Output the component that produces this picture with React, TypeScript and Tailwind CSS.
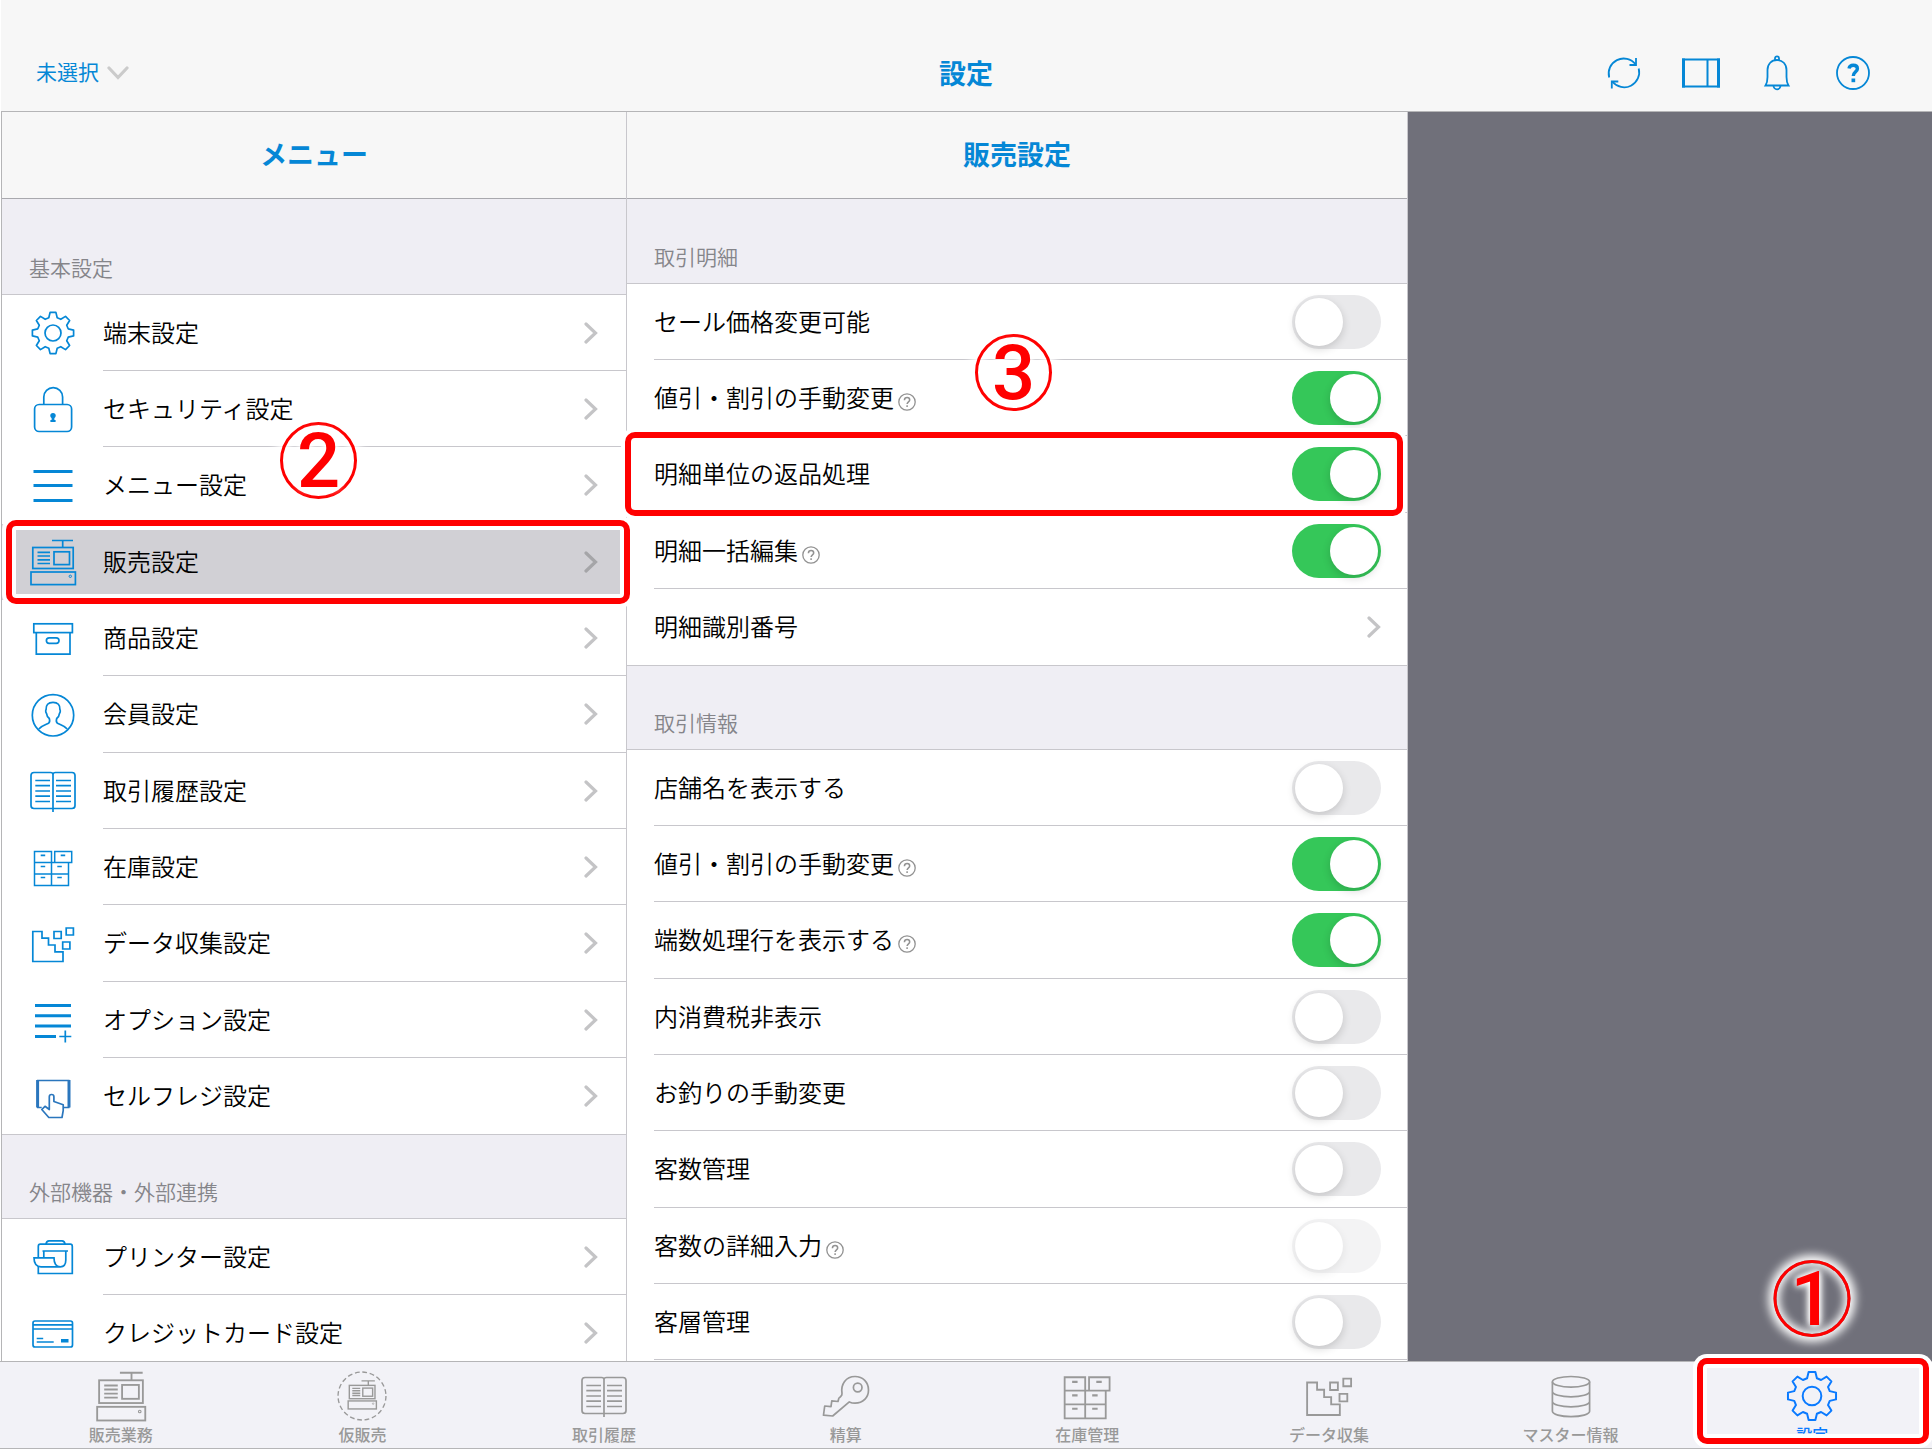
import { useState } from "react";
import type { ReactNode } from "react";
import clsx from "clsx";

type IconProps = { className?: string };

function Svg({ className = "size-12", children }: { className?: string; children: ReactNode }) {
  return (
    <svg viewBox="0 0 48 48" fill="none" stroke="currentColor" strokeWidth="1.7" className={clsx("shrink-0", className)} aria-hidden="true">
      {children}
    </svg>
  );
}

// one tooth is described around 12 o'clock and turned eight times
const tooth = [
  [-4.2, -15.2],
  [-2.9, -20.6],
  [2.9, -20.6],
  [4.2, -15.2],
];
const gearPath =
  Array.from({ length: 8 }, (_, i) => {
    const a = (i * Math.PI) / 4;
    return tooth
      .map(([x, y]) => `${(24 + x * Math.cos(a) - y * Math.sin(a)).toFixed(2)} ${(24 + x * Math.sin(a) + y * Math.cos(a)).toFixed(2)}`)
      .join("L");
  }).reduce((d, seg, i) => (i === 0 ? `M${seg}` : `${d}L${seg}`), "") + "Z";

const GearIcon = ({ className }: IconProps) => (
  <Svg className={className}>
    <path d={gearPath} strokeLinejoin="round" />
    <circle cx="24" cy="24" r="8" />
  </Svg>
);

const LockIcon = ({ className }: IconProps) => (
  <Svg className={className}>
    <path d="M14.8 19.5V12a9.4 9.4 0 0 1 18.8 0v7.5" />
    <rect x="5.6" y="19.5" width="37" height="27" rx="4.5" />
    <circle cx="24" cy="30.6" r="2.7" fill="currentColor" stroke="none" />
    <path d="M22.6 31h2.8v4h1.2v2h-5.2v-2h1.2z" fill="currentColor" stroke="none" />
  </Svg>
);

const LinesIcon = ({ className }: IconProps) => (
  <Svg className={className}>
    <path d="M4.5 9.5h39M4.5 23.5h39M4.5 38.5h39" strokeWidth="3" />
  </Svg>
);

const registerShape = (
  <>
    <path d="M23 2.5h21M33.7 2.5v7" />
    <rect x="3.8" y="9.5" width="40.4" height="21" />
    <rect x="25" y="13.8" width="15.5" height="12.8" />
    <path d="M8.5 14.3H21M8.5 18H21M8.5 21.8H21M8.5 25.5H21" />
    <rect x="2" y="34" width="44.4" height="12.6" />
    <circle cx="41.3" cy="38.3" r="1.2" strokeWidth="1" />
  </>
);

const RegisterIcon = ({ className }: IconProps) => <Svg className={className}>{registerShape}</Svg>;

const DashedRegisterIcon = ({ className }: IconProps) => (
  <Svg className={className}>
    <circle cx="24" cy="24" r="23" strokeDasharray="4.6 2.6" strokeWidth="1.3" />
    <g transform="translate(9.5 8) scale(.61)" strokeWidth="2.2">
      {registerShape}
    </g>
  </Svg>
);

const BoxIcon = ({ className }: IconProps) => (
  <Svg className={className}>
    <rect x="4.8" y="9.8" width="38.6" height="8.8" />
    <path d="M7.3 18.6v21.6H41V18.6" />
    <rect x="17.4" y="23.8" width="12.6" height="5.6" rx="2.8" />
  </Svg>
);

const PersonIcon = ({ className }: IconProps) => (
  <Svg className={className}>
    <circle cx="24" cy="24.3" r="20.7" />
    <path d="M9.8 38c2.5-3.2 7-4.2 9.7-5.7 1.5-1 1.4-2.8.8-4.8-1.9-1.5-2.6-3.3-2.8-5.2-.9-.8-1-3-.4-3.8-.3-4.5 2-7.2 6.900-7.200s7.200 2.700 6.900 7.200c.6.8.5 3-.4 3.800-.2 1.900-.9 3.700-2.800 5.200-.6 2-.7 3.800.8 4.800 2.700 1.500 7.200 2.500 9.700 5.700" />
  </Svg>
);

const BookIcon = ({ className }: IconProps) => (
  <Svg className={className}>
    <path d="M24 7.5c0-1.500-1-2-2.500-2H5a3 3 0 0 0-3 3v30a3 3 0 0 0 3 3h19M24 7.500c0-1.500 1-2 2.500-2H43a3 3 0 0 1 3 3v30a3 3 0 0 1-3 3H24M24 7v38" />
    <path d="M6.3 13.5H21M6.3 18.7H21M6.3 24H21M6.3 29.2H21M6.3 34.5H21M27 13.5h15M27 18.7h15M27 24h15M27 29.2h15M27 34.5h15" />
  </Svg>
);

const DrawersIcon = ({ className }: IconProps) => (
  <Svg className={className}>
    <path d="M5.5 8.5h17v11h-17zM25.7 8.5h17v11h-17zM5.5 19.5v23h34v-23M22.5 19.5v23M5.5 31h34M22.5 19.5h4" strokeWidth="1.5" />
    <path d="M11.7 12.3h4.5M31.7 12.3h4.5M11.7 23.5h4.5M28.3 23.5h4.5M11.7 34.5h4.5M28.3 34.5h4.5" />
  </Svg>
);

const DataIcon = ({ className }: IconProps) => (
  <Svg className={className}>
    <path d="M3.8 11.5H13v6.7h6.5V25H26v6.8h8v9.7H3.8z" />
    <path d="M25 11.5h7.2v7H25zM37.2 8h7.2v7h-7.2zM33.7 22h7.2v7h-7.2z" />
  </Svg>
);

const OptionIcon = ({ className }: IconProps) => (
  <Svg className={className}>
    <path d="M6 9.5h36M6 19.7h36M6 30h36M6 40.5h21" strokeWidth="3" />
    <path d="M30.3 40.5h12M36.3 34.5v12" />
  </Svg>
);

const TouchIcon = ({ className }: IconProps) => (
  <Svg className={className}>
    <g stroke="#2a76bd">
      <path d="M8 8.5h32.5M12.7 35.5H8M34.5 35.5h6" />
      <path d="M8.6 8v27.5M40 8v27.5" strokeWidth="3" />
      <path d="M20.3 37.5V24.8a2.3 2.3 0 0 1 4.6 0v4.7l9.3 3.2v6l-1.2 6.800H19.800l-7-8 3.200-3.200z" strokeLinejoin="round" />
    </g>
  </Svg>
);

const PrinterIcon = ({ className }: IconProps) => (
  <Svg className={className}>
    <path d="M9.3 24.5v-11c0-1.500.7-2.300 2-2.300h30c1.300 0 2 .8 2 2.300v27h-34v-6.800" />
    <path d="M17 11.2c.3-2.200 1.300-3.300 3-3.300h13c1.700 0 2.700 1.100 3 3.300M13.500 18H39" />
    <path d="M14.8 18v6.7M36.800 18v9c0 4-2 6.800-5.500 6.800H12c-4.500 0-7-3-7-9h20c0 5.500 1.800 9 6.300 9" />
  </Svg>
);

const CardIcon = ({ className }: IconProps) => (
  <Svg className={className}>
    <rect x="4" y="12" width="39.5" height="26" rx="2" />
    <path d="M4 15.8h39.5M4 20h39.5M7.7 29.5h6.5M7.7 33h17" />
    <rect x="32" y="30" width="7.5" height="3.5" fill="currentColor" stroke="none" />
  </Svg>
);

const KeyIcon = ({ className }: IconProps) => (
  <Svg className={className}>
    <path d="M20 21.5C18.5 12 24 4.500 33 4.500c8 0 13.500 6 13.500 13.500S41 31.200 33 31.200c-2 0-4-.5-5.700-1.300L10.700 44l-9.200-.8 1.200-9.200 6.300.6.8-5.800 6.200.7.900-3.500c.100 0 3.400-2 3.100-4.500z" strokeLinejoin="round" />
    <circle cx="35.7" cy="15.5" r="4.3" />
  </Svg>
);

const DatabaseIcon = ({ className }: IconProps) => (
  <Svg className={className}>
    <ellipse cx="24" cy="9.8" rx="18.6" ry="5.3" />
    <path d="M5.4 9.8v29.5c0 3 8.300 5.300 18.600 5.300s18.600-2.300 18.600-5.300V9.800M5.400 19.500c0 3 8.300 5.300 18.600 5.300s18.600-2.300 18.600-5.300M5.400 29.500c0 3 8.300 5.300 18.600 5.300s18.600-2.300 18.600-5.300" />
  </Svg>
);

const SyncIcon = () => (
  <svg viewBox="0 0 38 38" fill="none" stroke="currentColor" strokeWidth="1.8" className="w-[38px]" aria-hidden="true">
    <path d="M3.2 23.500A15 15 0 0 1 29.500 10.300M32.700 14.500A15 15 0 0 1 6.500 27.700" />
    <path d="M30 4v7h-6.500M5.800 34.500v-7h6.500" />
  </svg>
);

const PanelIcon = () => (
  <svg viewBox="0 0 38 38" fill="none" stroke="currentColor" strokeWidth="2" className="w-[38px]" aria-hidden="true">
    <path d="M0 5.500h38M0 32.500h38M25.500 5v28" />
    <path d="M1.500 4.500v29M36.500 4.500v29" strokeWidth="3" />
  </svg>
);

const BellIcon = () => (
  <svg viewBox="0 0 38 38" fill="none" stroke="currentColor" strokeWidth="1.8" className="w-[38px]" aria-hidden="true">
    <path d="M9.5 16c0-6 4-10 9.500-10s9.500 4 9.500 10v7c0 3.500.7 6.500 2 8.500h-23c1.300-2 2-5 2-8.500z" />
    <path d="M17 6V4.300a2 2 0 0 1 4 0V6M15.500 31.500a3.500 3.800 0 0 0 7 0" />
  </svg>
);

const HelpIcon = () => (
  <svg viewBox="0 0 38 38" fill="none" stroke="currentColor" className="w-[38px]" aria-hidden="true">
    <circle cx="19" cy="19" r="16" strokeWidth="1.8" />
    <path d="M15 14.5c.5-2.300 2-3.200 4.200-3.200 2.600 0 4.200 1.300 4.200 3.400 0 3.100-4.100 3.200-4.100 7.300" strokeWidth="3.4" />
    <path d="M17.5 24.5h3.7v3.7h-3.7z" fill="currentColor" stroke="none" />
  </svg>
);

const Chevron = ({ className }: IconProps) => (
  <svg viewBox="0 0 14 22" fill="none" stroke="currentColor" strokeWidth="3.2" strokeLinecap="round" className={clsx("h-[22px] w-3.5 shrink-0", className)} aria-hidden="true">
    <path d="M2 2l9.500 9L2 20" />
  </svg>
);

const basicMenu = [
  { label: "端末設定", icon: GearIcon },
  { label: "セキュリティ設定", icon: LockIcon },
  { label: "メニュー設定", icon: LinesIcon },
  { label: "販売設定", icon: RegisterIcon, marked: "2" },
  { label: "商品設定", icon: BoxIcon },
  { label: "会員設定", icon: PersonIcon },
  { label: "取引履歴設定", icon: BookIcon },
  { label: "在庫設定", icon: DrawersIcon },
  { label: "データ収集設定", icon: DataIcon },
  { label: "オプション設定", icon: OptionIcon },
  { label: "セルフレジ設定", icon: TouchIcon },
];

const deviceMenu = [
  { label: "プリンター設定", icon: PrinterIcon },
  { label: "クレジットカード設定", icon: CardIcon },
];

type Setting = { id: string; label: string; on?: boolean; help?: boolean; disabled?: boolean; link?: boolean; marked?: string };

const detailSettings: Setting[] = [
  { id: "sale-price", label: "セール価格変更可能" },
  { id: "detail-discount", label: "値引・割引の手動変更", on: true, help: true },
  { id: "detail-return", label: "明細単位の返品処理", on: true, marked: "3" },
  { id: "bulk-edit", label: "明細一括編集", on: true, help: true },
  { id: "detail-number", label: "明細識別番号", link: true },
];

const infoSettings: Setting[] = [
  { id: "store-name", label: "店舗名を表示する" },
  { id: "info-discount", label: "値引・割引の手動変更", on: true, help: true },
  { id: "rounding", label: "端数処理行を表示する", on: true, help: true },
  { id: "tax-hidden", label: "内消費税非表示" },
  { id: "change", label: "お釣りの手動変更" },
  { id: "guests", label: "客数管理" },
  { id: "guests-detail", label: "客数の詳細入力", help: true, disabled: true },
  { id: "segment", label: "客層管理" },
];

const tabs = [
  { label: "販売業務", icon: RegisterIcon, size: "size-[52px]" },
  { label: "仮販売", icon: DashedRegisterIcon, size: "size-[50px]" },
  { label: "取引履歴", icon: BookIcon, size: "size-12" },
  { label: "精算", icon: KeyIcon, size: "size-12" },
  { label: "在庫管理", icon: DrawersIcon, size: "size-[58px]" },
  { label: "データ収集", icon: DataIcon, size: "size-[52px]" },
  { label: "マスター情報", icon: DatabaseIcon, size: "size-12" },
  { label: "設定", icon: GearIcon, size: "size-[56px]", marked: "1" },
];

function StepNumber({ n, className }: { n: string; className: string }) {
  return (
    <span
      className={clsx(
        "pointer-events-none absolute -top-[102px] z-20 flex size-[77px] items-center justify-center rounded-full border-[3px] border-[#ff0000] font-['Roboto',sans-serif] text-[76px] leading-none font-medium text-[#ff0000] shadow-[0_0_10px_5px_#fff,inset_0_0_8px_3px_#fff] [text-shadow:0_0_5px_#fff,0_0_8px_#fff,0_0_10px_#fff]",
        className
      )}
    >
      {n}
    </span>
  );
}

function Frame({ className }: { className: string }) {
  return (
    <span
      className={clsx(
        "pointer-events-none absolute -top-1 z-10 rounded-[10px] border-[6px] border-[#ff0000] shadow-[0_0_0_4px_#fff,inset_0_0_0_4px_#fff]",
        className
      )}
    />
  );
}

function ColumnTitle({ children }: { children: ReactNode }) {
  return (
    <h2 className="flex h-[87px] items-center justify-center border-b border-[#a9a9ae] bg-[#f7f7f7] pb-0.5 text-[27px] font-bold text-[#0587d6]">{children}</h2>
  );
}

function SectionTitle({ children, className = "h-[85px] border-t" }: { children: ReactNode; className?: string }) {
  return (
    <h3 className={clsx("flex items-end border-b border-[#c8c7cc] bg-[#efeef4] pb-3 pl-[27px] text-[21px] leading-[30px] text-[#85858a]", className)}>
      {children}
    </h3>
  );
}

function MenuList({ items, selected, onSelect }: { items: typeof basicMenu; selected: string; onSelect: (label: string) => void }) {
  return (
    <ul>
      {items.map(({ label, icon: Icon, marked }) => (
        <li key={label} className="group relative h-[76px] nth-[3n]:h-[77px]">
          <button
            type="button"
            onClick={() => onSelect(label)}
            className={clsx("flex size-full items-center gap-[26px] pl-[27px] text-left", selected === label && "bg-[#d1d0d5]")}
          >
            <Icon className="size-12 text-[#0587d6]" />
            <span className="flex h-full flex-1 items-center justify-between border-b border-[#c8c7cc] pr-7 group-last:border-b-0">
              <span className="pb-0.5">{label}</span>
              <Chevron className={selected === label ? "text-[#a5a5a8]" : "text-[#c4c4c6]"} />
            </span>
          </button>
          {marked && (
            <>
              <Frame className="-right-1 left-1 h-[84px]" />
              <StepNumber n={marked} className="left-[278px]" />
            </>
          )}
        </li>
      ))}
    </ul>
  );
}

function SettingList({ items, openEnded }: { items: Setting[]; openEnded?: boolean }) {
  return (
    <ul>
      {items.map((item) => (
        <li key={item.id} className="group relative h-[76px] pl-[27px] nth-[3n]:h-[77px]">
          <div className={clsx("flex h-full items-center border-b border-[#c8c7cc] pr-[26px]", !openEnded && "group-last:border-b-0")}>
            {item.link ? (
              <button type="button" className="flex flex-1 items-center justify-between text-left">
                <span className="pb-0.5">{item.label}</span>
                <Chevron className="text-[#c4c4c6]" />
              </button>
            ) : (
              <>
                <label htmlFor={item.id} className="pb-0.5">{item.label}</label>
                {item.help && (
                  <button type="button" aria-label="ヘルプ" className="mt-2 ml-1 text-[#929292]">
                    <svg viewBox="0 0 18 18" fill="none" stroke="currentColor" strokeWidth="1.3" className="size-[18px]" aria-hidden="true">
                      <circle cx="9" cy="9" r="8.2" />
                      <path d="M6.4 7.2c.1-1.700 1.200-2.600 2.700-2.600s2.600.9 2.600 2.300c0 1.900-2.600 2-2.600 4.200M9.100 12.300v1.600" strokeWidth="1.5" />
                    </svg>
                  </button>
                )}
                <input
                  id={item.id}
                  type="checkbox"
                  role="switch"
                  defaultChecked={item.on}
                  disabled={item.disabled}
                  className="ml-auto h-[54px] w-[89px] shrink-0 appearance-none rounded-full bg-[#e9e9eb] px-[3px] py-[3px] before:block before:size-12 before:rounded-full before:bg-white before:shadow-[0_3px_8px_rgba(0,0,0,0.16)] checked:bg-[#35c759] checked:before:ml-auto disabled:opacity-50"
                />
              </>
            )}
          </div>
          {item.marked && (
            <>
              <Frame className="right-1 -left-0.5 h-[84px]" />
              <StepNumber n={item.marked} className="left-[348px]" />
            </>
          )}
        </li>
      ))}
    </ul>
  );
}

export default function App() {
  const [selected, setSelected] = useState("販売設定");
  const [tab, setTab] = useState("設定");

  return (
    <div className="flex h-screen flex-col overflow-hidden bg-white pl-px font-['Noto_Sans_CJK_JP',sans-serif] text-2xl font-[350] text-black">
      <header className="grid h-28 shrink-0 grid-cols-3 items-center border-b border-[#b5b5b7] bg-[#f7f7f7] pt-[35px] pr-[60px] pl-[35px] text-[#0587d6]">
        <button type="button" className="flex items-center gap-3 text-[21px] font-normal">
          <span className="pb-1">未選択</span>
          <Chevron className="rotate-90 text-[#cbcbcb]" />
        </button>
        <h1 className="pl-6 text-center text-[27px] font-bold">設定</h1>
        <div className="flex justify-end gap-[38px]">
          <button type="button" aria-label="更新"><SyncIcon /></button>
          <button type="button" aria-label="パネル"><PanelIcon /></button>
          <button type="button" aria-label="通知"><BellIcon /></button>
          <button type="button" aria-label="ヘルプ"><HelpIcon /></button>
        </div>
      </header>

      <main className="grid min-h-0 flex-1 grid-cols-[625fr_781fr_524fr] overflow-hidden border-l border-[#b5b5b7] bg-[#70707a]">
        <section className="min-w-0 border-r border-[#c8c7cc] bg-white">
          <ColumnTitle>メニュー</ColumnTitle>
          <SectionTitle className="h-24">基本設定</SectionTitle>
          <MenuList items={basicMenu} selected={selected} onSelect={setSelected} />
          <SectionTitle>外部機器・外部連携</SectionTitle>
          <MenuList items={deviceMenu} selected={selected} onSelect={setSelected} />
        </section>

        <section className="min-w-0 border-r border-[#c8c7cc] bg-white">
          <ColumnTitle>販売設定</ColumnTitle>
          <SectionTitle className="h-[85px]">取引明細</SectionTitle>
          <SettingList items={detailSettings} />
          <SectionTitle>取引情報</SectionTitle>
          <SettingList items={infoSettings} openEnded />
        </section>
      </main>

      <nav className="relative z-10 -mx-px flex h-[88px] shrink-0 border-y border-[#b5b5b7] bg-[#f2f2f7]">
        {tabs.map(({ label, icon: Icon, size, marked }) => (
          <div key={label} className="relative flex-1">
            <button
              type="button"
              onClick={() => setTab(label)}
              className={clsx("flex size-full flex-col items-center gap-1 pt-2.5 text-base leading-5 font-medium", tab === label ? "text-[#0a7aff]" : "text-[#999]")}
            >
              <span className="flex h-12 items-center justify-center">
                <Icon className={size} />
              </span>
              {label}
            </button>
            {marked && (
              <>
                <Frame className="right-1 bottom-1 left-1.5" />
                <StepNumber n={marked} className="left-1/2 -translate-x-1/2" />
              </>
            )}
          </div>
        ))}
      </nav>
    </div>
  );
}
